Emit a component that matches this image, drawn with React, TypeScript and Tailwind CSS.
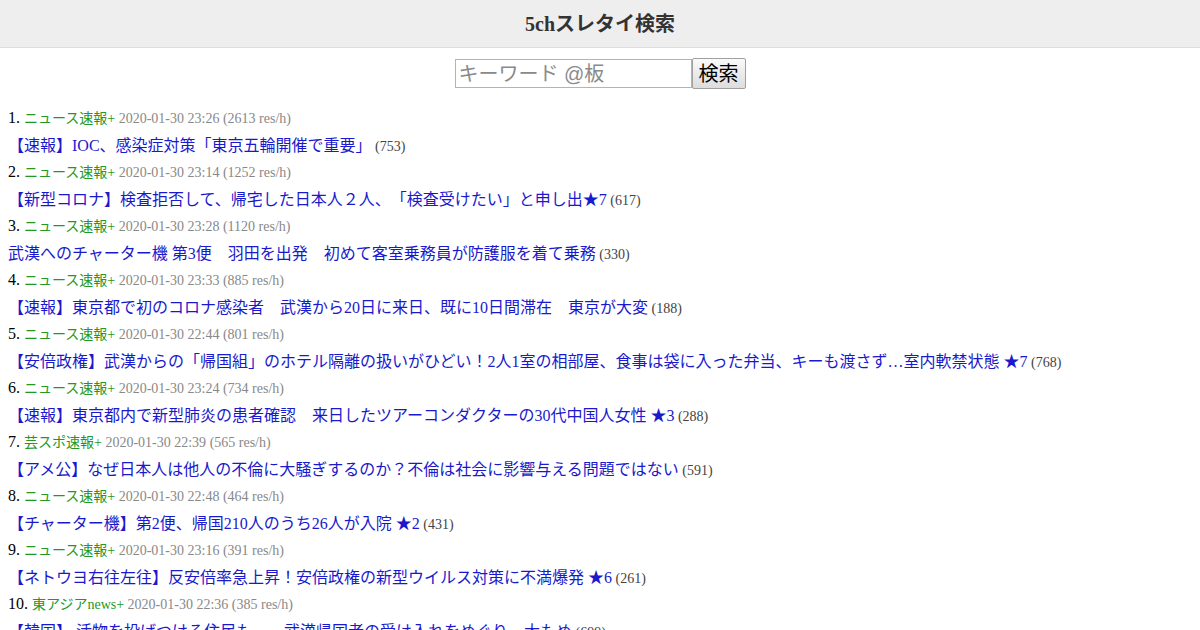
import React from 'react'

const threads = [
  { board: 'ニュース速報+', date: '2020-01-30 23:26', rate: 2613, title: '【速報】IOC、感染症対策「東京五輪開催で重要」', res: 753 },
  { board: 'ニュース速報+', date: '2020-01-30 23:14', rate: 1252, title: '【新型コロナ】検査拒否して、帰宅した日本人２人、「検査受けたい」と申し出★7', res: 617 },
  { board: 'ニュース速報+', date: '2020-01-30 23:28', rate: 1120, title: '武漢へのチャーター機 第3便　羽田を出発　初めて客室乗務員が防護服を着て乗務', res: 330 },
  { board: 'ニュース速報+', date: '2020-01-30 23:33', rate: 885, title: '【速報】東京都で初のコロナ感染者　武漢から20日に来日、既に10日間滞在　東京が大変', res: 188 },
  { board: 'ニュース速報+', date: '2020-01-30 22:44', rate: 801, title: '【安倍政権】武漢からの「帰国組」のホテル隔離の扱いがひどい！2人1室の相部屋、食事は袋に入った弁当、キーも渡さず…室内軟禁状態 ★7', res: 768 },
  { board: 'ニュース速報+', date: '2020-01-30 23:24', rate: 734, title: '【速報】東京都内で新型肺炎の患者確認　来日したツアーコンダクターの30代中国人女性 ★3', res: 288 },
  { board: '芸スポ速報+', date: '2020-01-30 22:39', rate: 565, title: '【アメ公】なぜ日本人は他人の不倫に大騒ぎするのか？不倫は社会に影響与える問題ではない', res: 591 },
  { board: 'ニュース速報+', date: '2020-01-30 22:48', rate: 464, title: '【チャーター機】第2便、帰国210人のうち26人が入院 ★2', res: 431 },
  { board: 'ニュース速報+', date: '2020-01-30 23:16', rate: 391, title: '【ネトウヨ右往左往】反安倍率急上昇！安倍政権の新型ウイルス対策に不満爆発 ★6', res: 261 },
  { board: '東アジアnews+', date: '2020-01-30 22:36', rate: 385, title: '【韓国】 活物を投げつける住民も……武漢帰国者の受け入れをめぐり…大もめ', res: 699 },
]

export default function App() {
  return (
    <div
      className="min-h-screen bg-white text-black [text-spacing-trim:space-all]"
      style={{ fontFamily: '"Liberation Serif", "Noto Sans CJK JP", serif' }}
    >
      {/* Header */}
      <header className="h-[48px] bg-[#eeeeee] border-b border-[#dddddd] flex items-center justify-center">
        <h1 className="text-[20px] font-bold text-[#333333]">5chスレタイ検索</h1>
      </header>

      {/* Search */}
      <form className="flex justify-center mt-[11px]" onSubmit={(e) => e.preventDefault()}>
        <input
          type="text"
          placeholder="キーワード @板"
          className="w-[237px] h-[29px] border border-[#d9b25c] pl-[3px] text-[20px] placeholder:text-[#8a8a8a] outline-none"
          style={{ fontFamily: '"Liberation Sans", "Noto Sans CJK JP", sans-serif' }}
        />
        <button
          type="submit"
          className="h-[31px] -mt-[1px] px-[6px] border border-[#a0a0a0] rounded-[2px] bg-gradient-to-b from-[#fafafa] to-[#dddddd] text-[20px]"
          style={{ fontFamily: '"Liberation Sans", "Noto Sans CJK JP", sans-serif' }}
        >
          検索
        </button>
      </form>

      {/* Results */}
      <ol className="mt-[15px] px-[8px]">
        {threads.map((t, i) => (
          <li key={i}>
            <div className="h-[27px] leading-[27px] whitespace-nowrap">
              <span className="text-[16px]">{i + 1}. </span>
              <span className="text-[14px] text-[#229922]">{t.board}</span>
              <span className="text-[14px] text-[#888888]"> {t.date} ({t.rate} res/h)</span>
            </div>
            <div className="h-[27px] leading-[29px] whitespace-nowrap">
              <a href="#" className="text-[16px] text-[#1a1acc]">{t.title}</a>
              <span className="text-[14px] text-[#444444]"> ({t.res})</span>
            </div>
          </li>
        ))}
      </ol>
    </div>
  )
}
